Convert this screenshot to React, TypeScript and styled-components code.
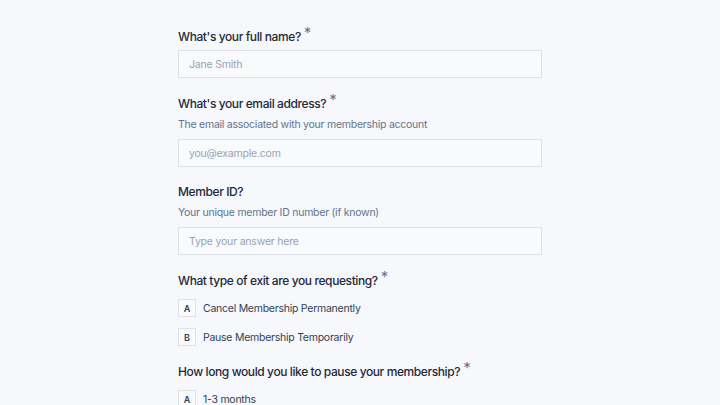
import React from "react";
import styled, { createGlobalStyle } from "styled-components";

const GlobalStyle = createGlobalStyle`
  html, body {
    margin: 0;
    padding: 0;
    background: #f6f8fb;
  }
  body {
    font-family: Inter, "Noto Sans", sans-serif;
    -webkit-font-smoothing: antialiased;
  }
`;

const Page = styled.div`
  height: 405px;
  overflow: hidden;
  padding-top: 26px;
  box-sizing: border-box;
`;

const Form = styled.form`
  width: 364px;
  margin: 0 auto;
  display: flex;
  flex-direction: column;
  gap: 15px;
`;

const Field = styled.div`
  display: flex;
  flex-direction: column;
`;

const Label = styled.label`
  font-size: 12px;
  line-height: 20px;
  font-weight: 500;
  letter-spacing: -0.4px;
  color: #1e293b;
  margin-bottom: 3px;
`;

const Required = styled.span`
  color: #6b7689;
  font-size: 15px;
  font-weight: 400;
  margin-left: 3px;
  position: relative;
  top: -3px;
`;

const Description = styled.div`
  font-size: 10.5px;
  line-height: 18px;
  letter-spacing: -0.25px;
  color: #64748b;
  margin: -1px 0 5px;
`;

const Input = styled.input`
  box-sizing: border-box;
  width: 100%;
  height: 28px;
  padding: 0 10px;
  border: 1px solid #dde2e9;
  border-radius: 0;
  background: #f8fafc;
  font-family: inherit;
  font-size: 10.5px;
  letter-spacing: -0.2px;
  color: #1e293b;
  outline: none;
  &::placeholder {
    color: #9aa3b0;
  }
`;

const Options = styled.div`
  display: flex;
  flex-direction: column;
  gap: 11px;
  margin-top: 5px;
`;

const Option = styled.div`
  display: flex;
  align-items: center;
  gap: 7px;
  font-size: 10.5px;
  letter-spacing: -0.25px;
  color: #334155;
`;

const Key = styled.span`
  box-sizing: border-box;
  width: 18px;
  height: 18px;
  display: flex;
  align-items: center;
  justify-content: center;
  border: 1px solid #dde2e9;
  background: #f8fafc;
  font-size: 9px;
  font-weight: 600;
  letter-spacing: 0;
  color: #334155;
`;

type Choice = { key: string; label: string };

const ChoiceField = ({ question, choices }: { question: string; choices: Choice[] }) => (
  <Field>
    <Label>
      {question}
      <Required>*</Required>
    </Label>
    <Options>
      {choices.map((c) => (
        <Option key={c.key}>
          <Key>{c.key}</Key>
          {c.label}
        </Option>
      ))}
    </Options>
  </Field>
);

export default function App() {
  return (
    <Page>
      <GlobalStyle />
      <Form onSubmit={(e) => e.preventDefault()}>
        <Field>
          <Label>
            What's your full name?<Required>*</Required>
          </Label>
          <Input placeholder="Jane Smith" />
        </Field>
        <Field>
          <Label>
            What's your email address?<Required>*</Required>
          </Label>
          <Description>The email associated with your membership account</Description>
          <Input placeholder="you@example.com" />
        </Field>
        <Field>
          <Label>Member ID?</Label>
          <Description>Your unique member ID number (if known)</Description>
          <Input placeholder="Type your answer here" />
        </Field>
        <ChoiceField
          question="What type of exit are you requesting?"
          choices={[
            { key: "A", label: "Cancel Membership Permanently" },
            { key: "B", label: "Pause Membership Temporarily" },
          ]}
        />
        <ChoiceField
          question="How long would you like to pause your membership?"
          choices={[
            { key: "A", label: "1-3 months" },
            { key: "B", label: "4-6 months" },
          ]}
        />
      </Form>
    </Page>
  );
}
